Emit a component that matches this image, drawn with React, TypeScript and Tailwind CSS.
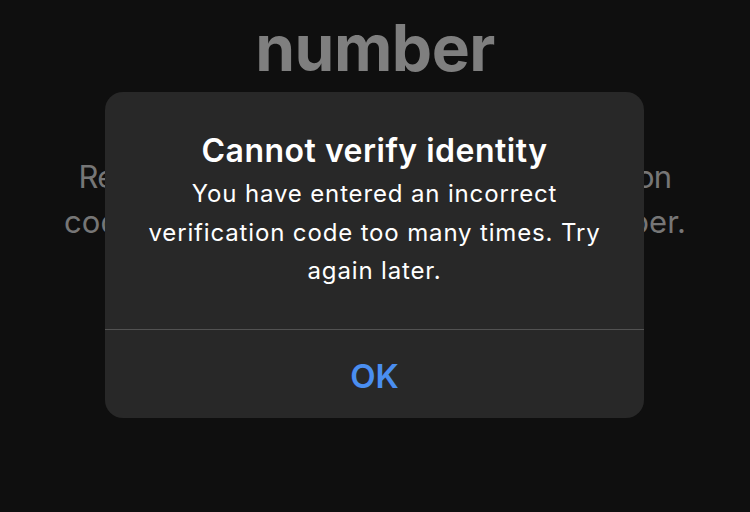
export default function App() {
  return (
    <div
      className="relative h-[512px] w-[750px] overflow-hidden bg-[#0f0f0f]"
      style={{ fontFamily: 'Inter, "Noto Sans", sans-serif' }}
    >
      {/* page behind the alert */}
      <div className="flex flex-col items-center">
        <div className="mt-[10px] text-[64px] font-bold leading-[76px] tracking-[-0.5px] text-[#7f7f7f]">
          number
        </div>
        <div className="mt-[68px] whitespace-nowrap text-center text-[31px] leading-[45px] text-[#767676]">
          <div className="tracking-[-0.65px]">Re-enter the six-digit SMS text verification</div>
          <div className="tracking-[0.1px]">code that was sent to your phone number.</div>
        </div>
      </div>

      {/* alert */}
      <div className="absolute left-[105px] top-[92px] flex h-[326px] w-[539px] flex-col rounded-[18px] bg-[#282828]">
        <div className="flex flex-1 flex-col items-center pt-[40px] text-center text-white">
          <div className="text-[32px] font-semibold leading-[38px] tracking-[0.5px]">
            Cannot verify identity
          </div>
          <div className="mt-[5px] text-[24px] leading-[38.5px] tracking-[0.85px]">
            <div>You have entered an incorrect</div>
            <div>verification code too many times. Try</div>
            <div>again later.</div>
          </div>
        </div>
        <div className="h-px bg-[#525252]" />
        <div className="flex h-[88px] items-center justify-center pt-[6px] text-[33px] font-semibold text-[#4a8ef0]">
          OK
        </div>
      </div>
    </div>
  )
}
